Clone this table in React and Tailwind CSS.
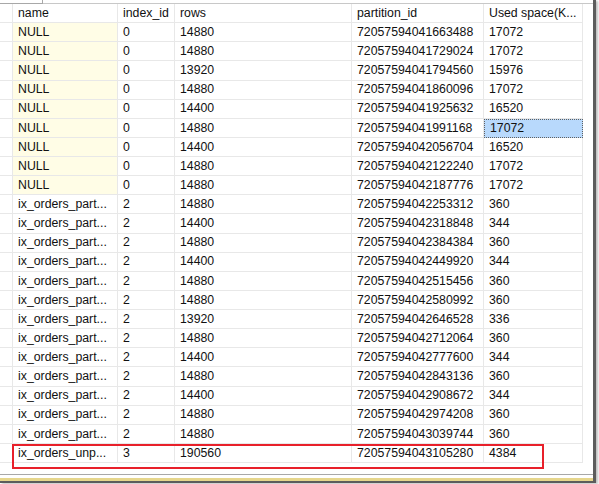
import React from "react"

const rows = [
  ["NULL", "0", "14880", "72057594041663488", "17072"],
  ["NULL", "0", "14880", "72057594041729024", "17072"],
  ["NULL", "0", "13920", "72057594041794560", "15976"],
  ["NULL", "0", "14880", "72057594041860096", "17072"],
  ["NULL", "0", "14400", "72057594041925632", "16520"],
  ["NULL", "0", "14880", "72057594041991168", "17072"],
  ["NULL", "0", "14400", "72057594042056704", "16520"],
  ["NULL", "0", "14880", "72057594042122240", "17072"],
  ["NULL", "0", "14880", "72057594042187776", "17072"],
  ["ix_orders_part...", "2", "14880", "72057594042253312", "360"],
  ["ix_orders_part...", "2", "14400", "72057594042318848", "344"],
  ["ix_orders_part...", "2", "14880", "72057594042384384", "360"],
  ["ix_orders_part...", "2", "14400", "72057594042449920", "344"],
  ["ix_orders_part...", "2", "14880", "72057594042515456", "360"],
  ["ix_orders_part...", "2", "14880", "72057594042580992", "360"],
  ["ix_orders_part...", "2", "13920", "72057594042646528", "336"],
  ["ix_orders_part...", "2", "14880", "72057594042712064", "360"],
  ["ix_orders_part...", "2", "14400", "72057594042777600", "344"],
  ["ix_orders_part...", "2", "14880", "72057594042843136", "360"],
  ["ix_orders_part...", "2", "14400", "72057594042908672", "344"],
  ["ix_orders_part...", "2", "14880", "72057594042974208", "360"],
  ["ix_orders_part...", "2", "14880", "72057594043039744", "360"],
  ["ix_orders_unp...", "3", "190560", "72057594043105280", "4384"],
]

const headers = ["name", "index_id", "rows", "partition_id", "Used space(K..."]

const cell = "h-[19.14px] flex items-center pl-[5px] border-r border-b border-[#e8e8e8] whitespace-nowrap overflow-hidden"

export default function App() {
  return (
    <div className="relative w-[599px] h-[484px] overflow-hidden bg-white font-['Liberation_Sans',Arial,sans-serif] text-[12.3px] text-[#111]">
      <div className="w-[596px] h-[483px] flex flex-col border-r-[3px] border-[#5c5c5c] shadow-[2px_1px_2px_rgba(0,0,0,0.25)]">
        {/* top edge */}
        <div className="h-[4px] flex shrink-0">
          <div className="w-[43px] border-r border-b border-[#a8a8a8]" />
          <div className="flex-1 border-b border-[#c8c8c8]" />
        </div>

        {/* results grid */}
        <div className="grid grid-cols-[13px_105px_57px_177px_132px_99px]">
          <div className={cell + " border-[#dadada]"} />
          {headers.map((h) => (
            <div key={h} className={cell + " border-[#dadada]"}>
              {h}
            </div>
          ))}

          {rows.map((r, i) => (
            <React.Fragment key={i}>
              <div className={cell} />
              <div className={cell + (r[0] === "NULL" ? " bg-[#fffde6]" : "")}>{r[0]}</div>
              <div className={cell}>{r[1]}</div>
              <div className={cell}>{r[2]}</div>
              <div className={cell}>{r[3]}</div>
              {i === 5 ? (
                <div className="h-[19.14px] flex items-center pl-[5px] border border-dotted border-[#606060] bg-[#b8d9fc]">
                  {r[4]}
                </div>
              ) : (
                <div className={cell}>{r[4]}</div>
              )}
            </React.Fragment>
          ))}
        </div>

        <div className="flex-1" />
        {/* bottom edge */}
        <div className="h-px bg-[#a8a8a8] shrink-0" />
        <div className="h-[3px] shrink-0" />
        <div className="h-[3px] bg-[#e6d68c] shrink-0" />
        <div className="h-[2px] bg-[#5c5c5c] shrink-0" />
      </div>

      {/* red highlight around last row */}
      <div className="absolute left-[12px] top-[444px] w-[532px] h-[25px] border-2 border-[#e8202a]" />
    </div>
  )
}
